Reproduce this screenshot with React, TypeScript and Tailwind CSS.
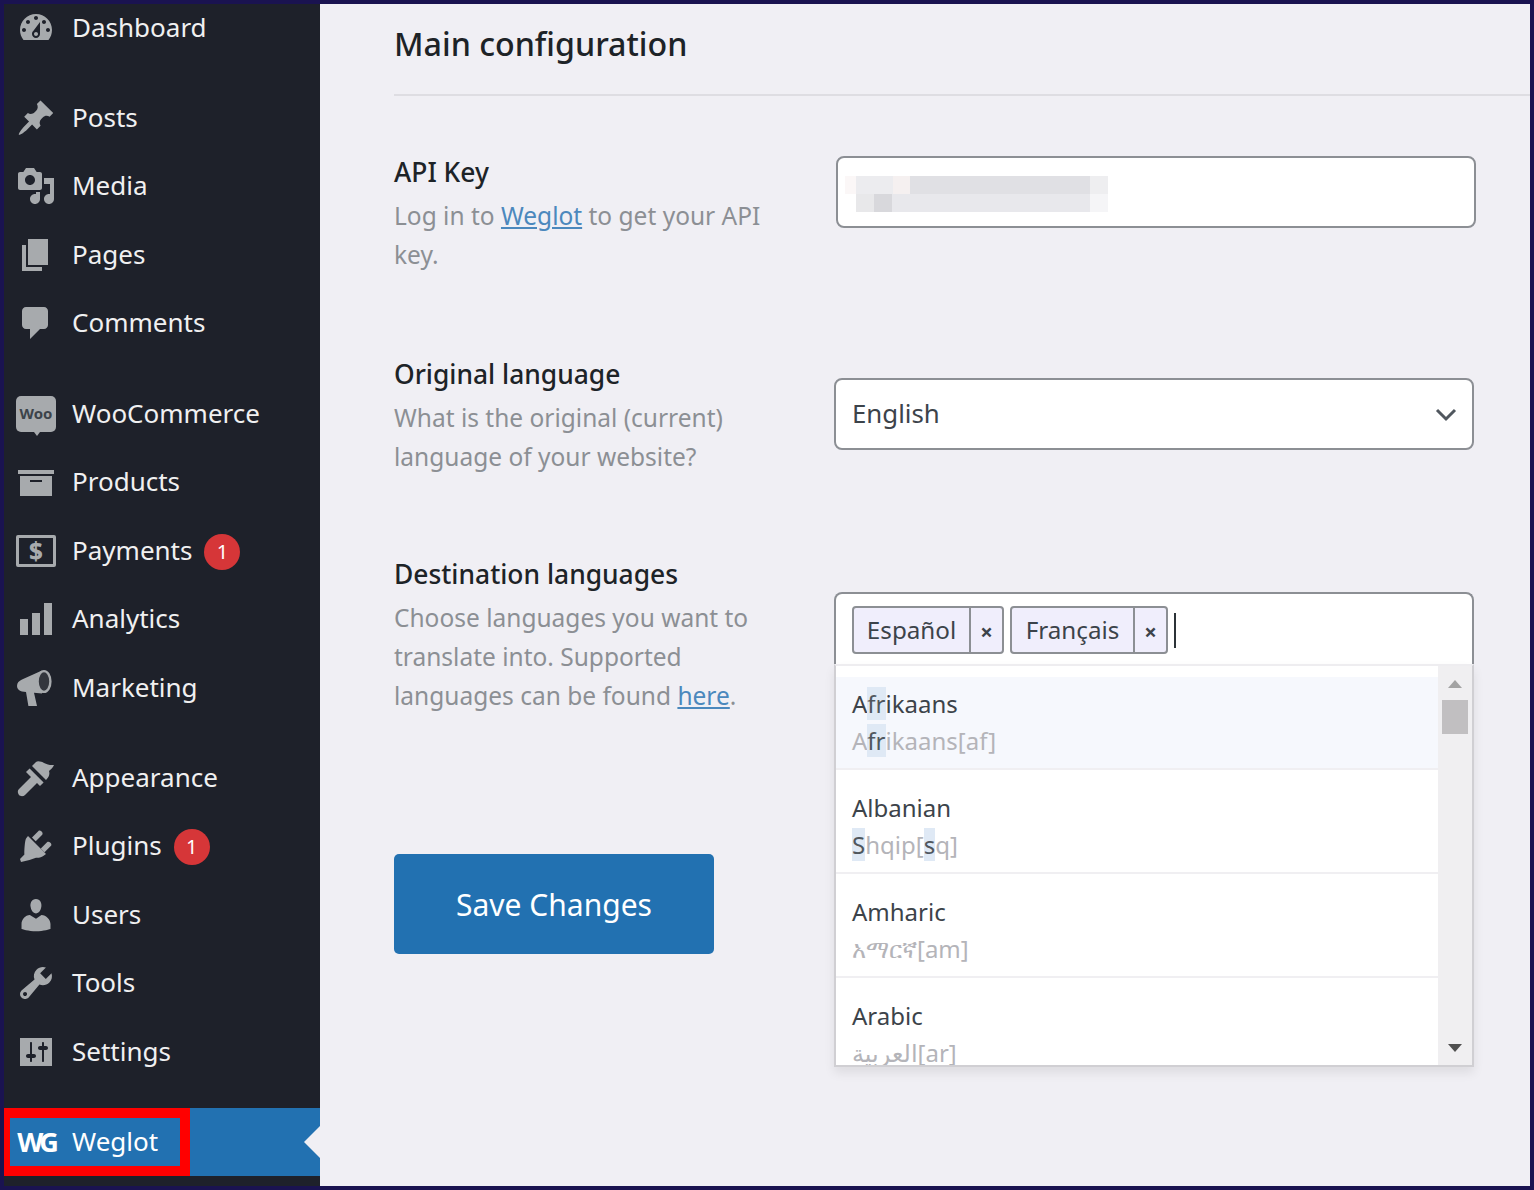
import React from "react";

const FONT = "font-['Noto_Sans','DejaVu_Sans',sans-serif]";

const Icon = ({ d, rule }: { d: string; rule?: "evenodd" }) => (
  <svg viewBox="0 0 20 20" className="h-10 w-10 shrink-0 fill-[#a7aaad]">
    <path d={d} fillRule={rule} clipRule={rule} />
  </svg>
);

const icons: Record<string, React.ReactNode> = {
  Dashboard: <Icon d="M3.76 16h12.48c1.1-1.37 1.76-3.11 1.76-5 0-4.42-3.58-8-8-8s-8 3.58-8 8c0 1.89.66 3.63 1.76 5zM10 4c.55 0 1 .45 1 1s-.45 1-1 1-1-.45-1-1 .45-1 1-1zM6 6c.55 0 1 .45 1 1s-.45 1-1 1-1-.45-1-1 .45-1 1-1zm8 0c.55 0 1 .45 1 1s-.45 1-1 1-1-.45-1-1 .45-1 1-1zm-5.37 5.55L12 7v6c0 1.1-.9 2-2 2s-2-.9-2-2c0-.57.24-1.08.63-1.45zM4 10c.55 0 1 .45 1 1s-.45 1-1 1-1-.45-1-1 .45-1 1-1zm12 0c.55 0 1 .45 1 1s-.45 1-1 1-1-.45-1-1 .45-1 1-1zm-5 3c0-.55-.45-1-1-1s-1 .45-1 1 .45 1 1 1 1-.45 1-1z" />,
  Posts: <Icon d="M10.44 3.02l1.82-1.82 6.36 6.35-1.83 1.82c-1.05-.68-2.48-.57-3.41.36l-.75.75c-.92.93-1.04 2.35-.35 3.41l-1.83 1.82-2.41-2.41-2.8 2.79c-.42.42-3.38 2.71-3.8 2.29s1.86-3.39 2.28-3.81l2.79-2.79L4.1 9.36l1.83-1.82c1.05.69 2.48.57 3.4-.36l.75-.75c.93-.92 1.05-2.35.36-3.41z" />,
  Media: <Icon d="M13 11V4c0-.55-.45-1-1-1h-1.67L9 1H5L3.67 3H2c-.55 0-1 .45-1 1v7c0 .55.45 1 1 1h10c.55 0 1-.45 1-1zM7 4.5c1.38 0 2.5 1.12 2.5 2.5S8.38 9.5 7 9.5 4.5 8.38 4.5 7 5.62 4.5 7 4.5zM14 6h5v10.5c0 1.38-1.12 2.5-2.5 2.5S14 17.88 14 16.5s1.12-2.5 2.5-2.5c.17 0 .34.02.5.05V9h-3V6zm-4 8.05V13h2v3.5c0 1.38-1.12 2.5-2.5 2.5S7 17.88 7 16.5 8.12 14 9.5 14c.17 0 .34.02.5.05z" />,
  Pages: <Icon d="M6 15V2h10v13H6zm-1 1h8v2H3V5h2v11z" />,
  Comments: <Icon d="M5 2h9c1.1 0 2 .9 2 2v7c0 1.1-.9 2-2 2h-2l-5 5v-5H5c-1.1 0-2-.9-2-2V4c0-1.1.9-2 2-2z" />,
  WooCommerce: (
    <span className="relative flex h-[36px] w-10 shrink-0 items-center justify-center rounded-[5px] bg-[#a7aaad] text-[15px] font-bold leading-none text-[#3c434a]">
      Woo
      <span className="absolute bottom-[-4px] left-[18px] border-x-[3px] border-t-[4px] border-x-transparent border-t-[#a7aaad]" />
    </span>
  ),
  Products: <Icon d="M19 4v2H1V4h18zM2 7h16v10H2V7zm11 3V9H7v1h6z" />,
  Payments: (
    <span className="flex h-8 w-10 shrink-0 items-center justify-center rounded-[2px] border-[3px] border-[#a7aaad] text-[24px] font-extrabold leading-none text-[#a7aaad]">
      $
    </span>
  ),
  Analytics: <Icon d="M18 18V2h-4v16h4zm-6 0V7H8v11h4zm-6 0v-8H2v8h4z" />,
  Marketing: (
    <svg viewBox="0 0 20 20" className="h-10 w-10 shrink-0">
      <path
        className="fill-[#a7aaad]"
        d="M13 1.200L3 5.800C1.500 6.500.5 7.500.5 9s1 2.300 2.500 2.700L5 12l1.200 7h4.300L9 12.400l4 .3z"
      />
      <ellipse cx="14" cy="6.750" rx="3.200" ry="5.200" className="fill-[#33363d] stroke-[#a7aaad] stroke-[1.200]" />
    </svg>
  ),
  Appearance: <Icon d="M8 4l2-2c1-.8 3 0 4 .5 1.500.700 3 1.200 5 1-.5 1.500-2 2.500-2.500 3 .5 1.500 0 3-1.500 4.500zM6.800 5.200l7 7-1.800 1.800-1.500-1.500-6 6c-1 1-2.500.5-3 0s-1-2 0-3l6-6L5 7z" />,
  Plugins: <Icon d="M13.110 4.360L9.870 7.600 8 5.730l3.240-3.240c.350-.340 1.050-.2 1.560.320.520.510.660 1.210.310 1.550zm4.400 5.530l-3.240 3.240-1.870-1.870 3.240-3.240c.350-.340 1.050-.2 1.560.320.520.510.660 1.210.310 1.550zM5.110 6.130L6 5l9 9-1.190.840c-.710.710-2.630 1.160-3.820 1L6.760 17 2.500 18 2 16.500l2.200-2.300c-.160-1.190.200-7.360.910-8.070z" />,
  Users: <Icon d="M10 9.250c-2.270 0-2.730-3.440-2.730-3.440C7 4.020 7.820 2 9.970 2c2.160 0 2.980 2.020 2.710 3.810 0 0-.41 3.440-2.680 3.440zm0 2.570L12.720 10c2.390 0 4.520 2.330 4.520 4.530v2.490s-3.650 1.130-7.240 1.130c-3.650 0-7.240-1.130-7.240-1.130v-2.490c0-2.250 1.940-4.480 4.150-4.480z" />,
  Tools: <Icon d="M16.680 9.770c-1.340 1.340-3.300 1.670-4.950.99l-5.410 6.520c-.99.99-2.590.99-3.580 0s-.99-2.590 0-3.570l6.520-5.420c-.68-1.650-.35-3.610.99-4.950 1.280-1.280 3.120-1.620 4.710-1.060l-2.890 2.890 2.820 2.820 2.860-2.860c.53 1.580.18 3.390-1.070 4.640zM3.810 16.210c.4.39 1.030.39 1.420 0 .4-.4.4-1.030 0-1.430-.39-.39-1.020-.39-1.420 0-.39.4-.39 1.030 0 1.430z" />,
  Settings: <Icon d="M18 16V3H2v14h16zM8 11h1c.55 0 1 .45 1 1s-.45 1-1 1H8v1.500c0 .28-.22.5-.5.5s-.5-.22-.5-.5V13H6c-.55 0-1-.45-1-1s.45-1 1-1h1V5.500c0-.28.22-.5.5-.5s.5.22.5.5V11zm5-2h-1c-.55 0-1-.45-1-1s.45-1 1-1h1V5.500c0-.28.22-.5.5-.5s.5.22.5.5V7h1c.55 0 1 .45 1 1s-.45 1-1 1h-1v5.500c0 .28-.22.5-.5.5s-.5-.22-.5-.5V9z" rule="evenodd" />,
};

const Row = ({ name, badge }: { name: string; badge?: boolean }) => (
  <div className="flex h-[68.45px] items-center pl-[12px] text-[26px] text-[#f0f0f1]">
    <span className="flex w-10 shrink-0 justify-center">{icons[name]}</span>
    <span className="mb-[1px] ml-[16px]">{name}</span>
    {badge && (
      <span className="ml-3 mt-[2px] flex h-9 w-9 items-center justify-center rounded-full bg-[#d63638] text-[20px] leading-none text-white">
        1
      </span>
    )}
  </div>
);

const Sidebar = () => (
  <aside className="flex w-[316px] shrink-0 flex-col bg-[#1e212a]">
    <div className="flex h-[48px] items-center pl-[12px] text-[26px] text-[#f0f0f1]">
      {icons.Dashboard}
      <span className="mb-[2px] ml-[16px]">Dashboard</span>
    </div>
    <div className="mt-[31.8px]">
      {["Posts", "Media", "Pages", "Comments"].map((n) => (
        <Row key={n} name={n} />
      ))}
    </div>
    <div className="mt-[22px]">
      <Row name="WooCommerce" />
      <Row name="Products" />
      <Row name="Payments" badge />
      <Row name="Analytics" />
      <Row name="Marketing" />
    </div>
    <div className="mt-[22px]">
      <Row name="Appearance" />
      <Row name="Plugins" badge />
      <Row name="Users" />
      <Row name="Tools" />
      <Row name="Settings" />
    </div>
    <div className="relative mt-[21.9px] flex h-[68px] items-center bg-[#2271b1] pl-[12px] text-[26px] text-white">
      <span className="w-10 shrink-0 text-center text-[27px] font-bold leading-none tracking-[-4px]">WG</span>
      <span className="ml-[16px]">Weglot</span>
      <span className="ml-auto h-0 w-0 border-y-[16px] border-r-[16px] border-y-transparent border-r-[#f0eff4]" />
      <span className="absolute left-0 top-0 h-[68px] w-[186px] border-y-[10px] border-l-[6px] border-r-[10px] border-[#ff0000]" />
    </div>
  </aside>
);

const Label = ({ children }: { children: React.ReactNode }) => (
  <div className="text-[26.4px] font-medium leading-[38px] text-[#1d2327]">{children}</div>
);

const Desc = ({ children }: { children: React.ReactNode }) => (
  <p className="mt-[6px] text-[24.5px] leading-[38.9px] text-[#8c8f94]">{children}</p>
);

const Mark = ({ children }: { children: React.ReactNode }) => (
  <span className="bg-[#dfe9f5] text-[#50575e]">{children}</span>
);

const Option = ({
  name,
  sub,
  active,
  last,
}: {
  name: React.ReactNode;
  sub: React.ReactNode;
  active?: boolean;
  last?: boolean;
}) => (
  <div className={`${last ? "" : "border-b-2 border-[#f0eff2]"} h-[104px] bg-white pt-[11px]`}>
    <div className={`${active ? "bg-[#f6f8fd]" : ""} h-[91px] pl-[16px] pt-[10px]`}>
      <div className="text-[24px] leading-[34px] text-[#3c434a]">{name}</div>
      <div className="mt-[3px] text-[24px] leading-[34px] text-[#b4b4b9]">{sub}</div>
    </div>
  </div>
);

const Tag = ({ label, wText }: { label: string; wText: string }) => (
  <div className="flex h-12 items-center rounded-[4px] border-2 border-[#8c8f94] bg-[#f0eefc] text-[24.2px] text-[#3c434a]">
    <span className={`${wText} text-center`}>{label}</span>
    <span className="flex h-full w-[33px] items-center justify-center border-l-2 border-[#8c8f94] pt-[2px] text-[22px] font-bold leading-none">
      ×
    </span>
  </div>
);

const Blur = () => (
  <div className="mt-[4px] flex flex-col">
    <div className="flex h-[18px]">
      <div className="w-[11px] bg-[#fbf7f7]" />
      <div className="w-[37px] bg-[#ececef]" />
      <div className="w-[17px] bg-[#f5f0f0]" />
      <div className="w-[180px] bg-[#e0e0e4]" />
      <div className="w-[18px] bg-[#eeeef0]" />
    </div>
    <div className="flex h-[18px] pl-[11px]">
      <div className="w-[18px] bg-[#e8e8ea]" />
      <div className="w-[18px] bg-[#d8d8dc]" />
      <div className="w-[198px] bg-[#e8e8ec]" />
      <div className="w-[18px] bg-[#f5f5f7]" />
    </div>
  </div>
);

const Main = () => (
  <main className="flex-1 bg-[#f0eff4]">
    <div className="ml-[74px] flex h-[92px] flex-col">
      <h1 className="pt-[16px] text-[32.2px] font-medium leading-[48px] text-[#1d2327]">Main configuration</h1>
      <div className="mt-auto h-[2px] bg-[#dedde2]" />
    </div>

    <div className="ml-[74px] mt-[57px] flex h-[202px] items-start">
      <div className="w-[441px] shrink-0 pr-[60px]">
        <Label>API Key</Label>
        <Desc>
          Log in to <span className="text-[#4b88bd] underline">Weglot</span> to get your API key.
        </Desc>
      </div>
      <div className="ml-px mt-[3px] flex h-[72px] w-[640px] items-center rounded-[8px] border-2 border-[#8c8f94] bg-white pl-[7px]">
        <Blur />
      </div>
    </div>

    <div className="ml-[74px] flex h-[200px] items-start">
      <div className="w-[440px] shrink-0 pr-[40px]">
        <Label>Original language</Label>
        <Desc>What is the original (current) language of your website?</Desc>
      </div>
      <div className="mt-[23px] flex h-[71.5px] w-[640px] items-center justify-between rounded-[8px] border-2 border-[#8c8f94] bg-white pl-[16px] pr-[14px] text-[25.8px] text-[#3c434a]">
        English
        <svg viewBox="0 0 24 24" className="h-[24px] w-[24px] fill-none stroke-[#50575e] stroke-[3]">
          <path d="M3 8l9 9 9-9" />
        </svg>
      </div>
    </div>

    <div className="ml-[74px] flex h-[299px] items-start">
      <div className="w-[440px] shrink-0 pr-[40px]">
        <Label>Destination languages</Label>
        <Desc>
          Choose languages you want to translate into. Supported languages can be found{" "}
          <span className="text-[#4b88bd] underline">here</span>.
        </Desc>
      </div>
      <div className="relative mt-[37px] w-[640px]">
        <div className="flex h-[74px] items-center gap-[6px] rounded-t-[8px] border-x-2 border-t-2 border-[#8c8f94] bg-white pl-[16px]">
          <Tag label="Español" wText="w-[115px]" />
          <Tag label="Français" wText="w-[121px]" />
          <span className="h-[35px] w-[2px] bg-[#2c3338]" />
        </div>
        <div className="absolute left-0 top-[72px] z-10 flex h-[403px] w-full overflow-hidden border-x-2 border-b-2 border-t-2 border-x-[#d0cfd3] border-b-[#d0cfd3] border-t-[#eeedf0] bg-white shadow-[0_6px_10px_rgba(0,0,0,0.08)]">
          <div className="flex-1 overflow-hidden">
            <Option
              active
              name={<>A<Mark>fr</Mark>ikaans</>}
              sub={<>A<Mark>fr</Mark>ikaans[af]</>}
            />
            <Option
              name="Albanian"
              sub={<><Mark>S</Mark>hqip[<Mark>s</Mark>q]</>}
            />
            <Option name="Amharic" sub="አማርኛ[am]" />
            <Option last name="Arabic" sub="العربية[ar]" />
          </div>
          <div className="flex w-[34px] shrink-0 flex-col items-center bg-[#f0eff1] pt-[14px]">
            <span className="h-0 w-0 border-x-[7px] border-b-[8px] border-x-transparent border-b-[#a3a3a3]" />
            <span className="mt-[12px] h-[34px] w-[26px] bg-[#c1bfc1]" />
            <span className="mb-[13px] mt-auto h-0 w-0 border-x-[7px] border-t-[8px] border-x-transparent border-t-[#505050]" />
          </div>
        </div>
      </div>
    </div>

    <button className="ml-[74px] h-[100px] w-[320px] rounded-[5px] bg-[#2271b1] text-[30px] text-white">
      Save Changes
    </button>
  </main>
);

export default function App() {
  return (
    <div className={`${FONT} flex h-[1190px] w-[1534px] overflow-hidden border-4 border-[#1a1350]`}>
      <Sidebar />
      <Main />
    </div>
  );
}
